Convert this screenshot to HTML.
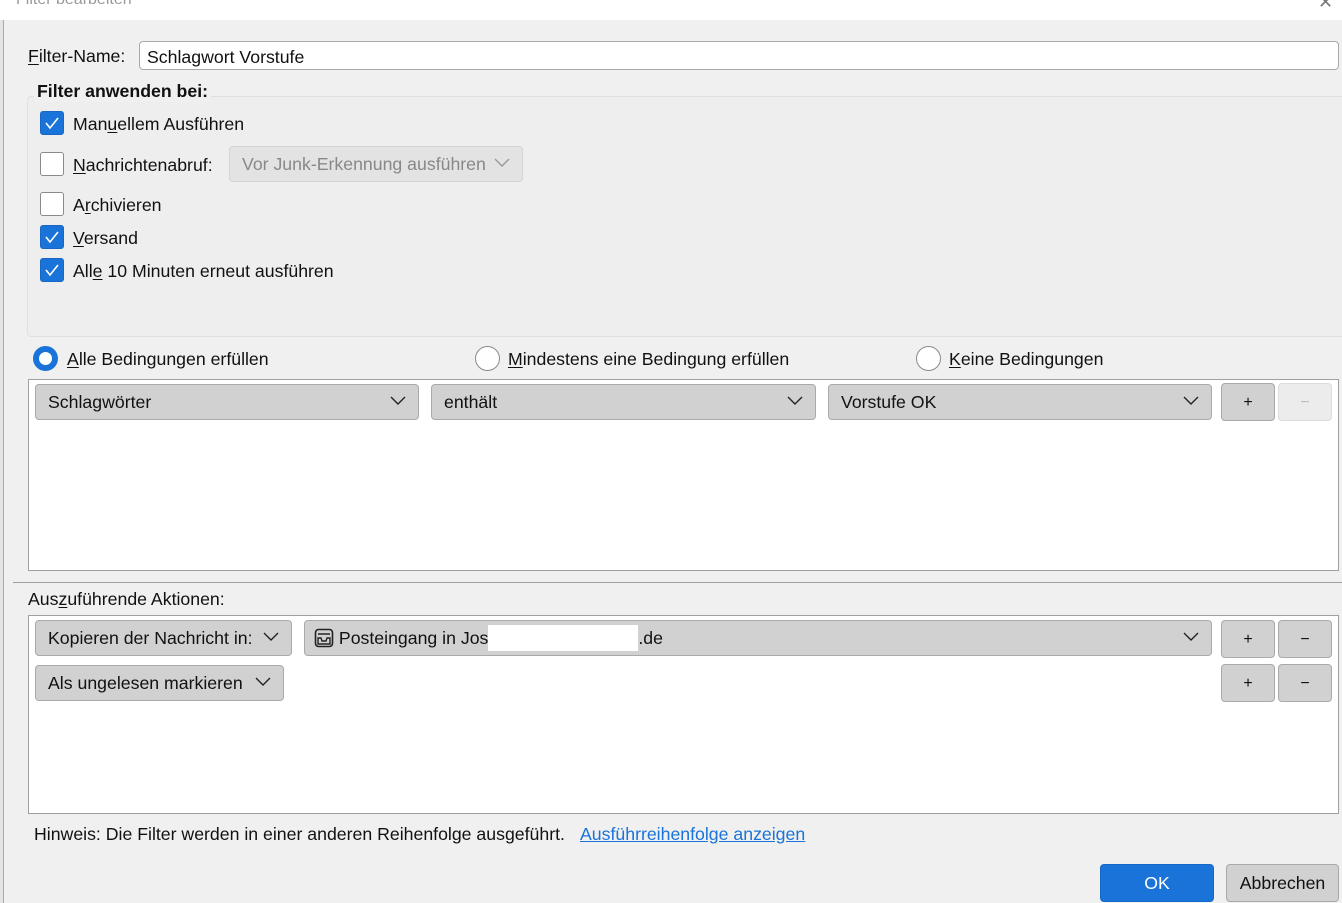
<!DOCTYPE html>
<html><head><meta charset="utf-8"><style>
*{box-sizing:border-box;margin:0;padding:0}
body{width:1342px;height:903px;background:#f0f0f0;font-family:"Liberation Sans",sans-serif;font-size:17.7px;color:#111;position:relative;overflow:hidden}
.a{position:absolute;white-space:nowrap}
.sel{position:absolute;background:#d1d1d1;border:1px solid #a9a9a9;border-radius:4px;height:36px;line-height:35px;padding-left:12px}
.chev{position:absolute;right:12px;top:11px;width:16px;height:10px}
.btn{position:absolute;background:#d1d1d1;border:1px solid #a9a9a9;border-radius:4px;width:54px;height:38px;text-align:center;line-height:37px;font-size:16px}
.cb{position:absolute;width:24px;height:24px;border-radius:3px}
.on{background:#1a73d9;border:1px solid #1a66c4}
.off{background:#fff;border:1px solid #8a8a8a}
u{text-decoration:underline;text-underline-offset:2px}
</style></head><body>
<div class="a" style="left:0;top:0;width:1342px;height:20px;background:#fff"></div>
<div class="a" style="left:16px;top:-9px;color:#999;font-size:16px">Filter bearbeiten</div>
<div class="a" style="left:1318px;top:-8px;color:#777;font-size:18px">✕</div>
<div class="a" style="left:0;top:20px;width:4px;height:883px;background:#e4e4e4;border-right:1px solid #aaa"></div>

<div class="a" style="left:28px;top:46px"><u>F</u>ilter-Name:</div>
<div class="a" style="left:139px;top:41px;width:1200px;height:29px;background:#fff;border:1px solid #a9a9a9;border-radius:4px;padding:5px 7px">Schlagwort Vorstufe</div>

<div class="a" style="left:27px;top:96px;width:1320px;height:241px;background:#eeeeee;border:1px solid #e0e0e0;border-radius:4px"></div>
<div class="a" style="left:34px;top:81px;font-weight:bold;background:#f0f0f0;padding:0 3px">Filter anwenden bei:</div>

<div class="cb on" style="left:40px;top:111px"><svg width="22" height="22" viewBox="0 0 22 22"><path d="M5 11l4 5 8-10" fill="none" stroke="#fff" stroke-width="1.6"/></svg></div>
<div class="a" style="left:73px;top:114px">Man<u>u</u>ellem Ausführen</div>
<div class="cb off" style="left:40px;top:152px"></div>
<div class="a" style="left:73px;top:155px"><u>N</u>achrichtenabruf:</div>
<div class="a" style="left:229px;top:146px;width:294px;height:36px;background:#e3e3e3;border:1px solid #d3d3d3;border-radius:4px;color:#888;line-height:35px;padding-left:12px">Vor Junk-Erkennung ausführen<svg class="chev" style="right:12px" viewBox="0 0 16 10"><path d="M1 1l7 7 7-7" fill="none" stroke="#999" stroke-width="1.4"/></svg></div>
<div class="cb off" style="left:40px;top:192px"></div>
<div class="a" style="left:73px;top:195px">A<u>r</u>chivieren</div>
<div class="cb on" style="left:40px;top:225px"><svg width="22" height="22" viewBox="0 0 22 22"><path d="M5 11l4 5 8-10" fill="none" stroke="#fff" stroke-width="1.6"/></svg></div>
<div class="a" style="left:73px;top:228px"><u>V</u>ersand</div>
<div class="cb on" style="left:40px;top:258px"><svg width="22" height="22" viewBox="0 0 22 22"><path d="M5 11l4 5 8-10" fill="none" stroke="#fff" stroke-width="1.6"/></svg></div>
<div class="a" style="left:73px;top:261px">All<u>e</u> 10 Minuten erneut ausführen</div>

<div class="a" style="left:33px;top:346px;width:25px;height:25px;border-radius:50%;background:#fff;border:6px solid #1a73d9"></div>
<div class="a" style="left:67px;top:349px"><u>A</u>lle Bedingungen erfüllen</div>
<div class="a" style="left:475px;top:346px;width:25px;height:25px;border-radius:50%;background:#fff;border:1px solid #8a8a8a"></div>
<div class="a" style="left:508px;top:349px"><u>M</u>indestens eine Bedingung erfüllen</div>
<div class="a" style="left:916px;top:346px;width:25px;height:25px;border-radius:50%;background:#fff;border:1px solid #8a8a8a"></div>
<div class="a" style="left:949px;top:349px"><u>K</u>eine Bedingungen</div>

<div class="a" style="left:28px;top:379px;width:1311px;height:192px;background:#fff;border:1px solid #a0a0a0"></div>
<div class="sel" style="left:35px;top:384px;width:384px">Schlagwörter<svg class="chev" viewBox="0 0 16 10"><path d="M1 1l7 7 7-7" fill="none" stroke="#222" stroke-width="1.4"/></svg></div>
<div class="sel" style="left:431px;top:384px;width:385px">enthält<svg class="chev" viewBox="0 0 16 10"><path d="M1 1l7 7 7-7" fill="none" stroke="#222" stroke-width="1.4"/></svg></div>
<div class="sel" style="left:828px;top:384px;width:384px">Vorstufe OK<svg class="chev" viewBox="0 0 16 10"><path d="M1 1l7 7 7-7" fill="none" stroke="#222" stroke-width="1.4"/></svg></div>
<div class="btn" style="left:1221px;top:383px">+</div>
<div class="btn" style="left:1278px;top:383px;background:#ececec;border-color:#dcdcdc;color:#bbb">−</div>

<div class="a" style="left:13px;top:582px;width:1329px;height:1px;background:#a0a0a0"></div>
<div class="a" style="left:28px;top:589px">Aus<u>z</u>uführende Aktionen:</div>

<div class="a" style="left:28px;top:615px;width:1311px;height:199px;background:#fff;border:1px solid #a0a0a0"></div>
<div class="sel" style="left:35px;top:620px;width:257px">Kopieren der Nachricht in:<svg class="chev" viewBox="0 0 16 10"><path d="M1 1l7 7 7-7" fill="none" stroke="#222" stroke-width="1.4"/></svg></div>
<div class="sel" style="left:304px;top:620px;width:908px;padding-left:9px"><svg width="20" height="20" viewBox="0 0 20 20" style="vertical-align:-4px"><rect x="1.5" y="1.5" width="17" height="17" rx="3" fill="none" stroke="#222" stroke-width="1.6"/><path d="M4 6h12M4 10h3l1 3h4l1-3h3v6H4z" fill="none" stroke="#222" stroke-width="1.4"/></svg> Posteingang in Jos<span style="display:inline-block;width:150px;height:26px;background:#fff;vertical-align:-7px"></span>.de<svg class="chev" viewBox="0 0 16 10"><path d="M1 1l7 7 7-7" fill="none" stroke="#222" stroke-width="1.4"/></svg></div>
<div class="btn" style="left:1221px;top:620px">+</div>
<div class="btn" style="left:1278px;top:620px">−</div>
<div class="sel" style="left:35px;top:665px;width:249px">Als ungelesen markieren<svg class="chev" viewBox="0 0 16 10"><path d="M1 1l7 7 7-7" fill="none" stroke="#222" stroke-width="1.4"/></svg></div>
<div class="btn" style="left:1221px;top:664px">+</div>
<div class="btn" style="left:1278px;top:664px">−</div>

<div class="a" style="left:34px;top:824px">Hinweis: Die Filter werden in einer anderen Reihenfolge ausgeführt.</div>
<div class="a" style="left:580px;top:824px;color:#1a73d9;text-decoration:underline">Ausführreihenfolge anzeigen</div>

<div class="a" style="left:1100px;top:864px;width:114px;height:38px;background:#1a73d9;border:1px solid #1668c8;border-radius:4px;color:#fff;text-align:center;line-height:37px">OK</div>
<div class="a" style="left:1226px;top:864px;width:113px;height:38px;background:#d1d1d1;border:1px solid #a9a9a9;border-radius:4px;text-align:center;line-height:37px">Abbrechen</div>
</body></html>
